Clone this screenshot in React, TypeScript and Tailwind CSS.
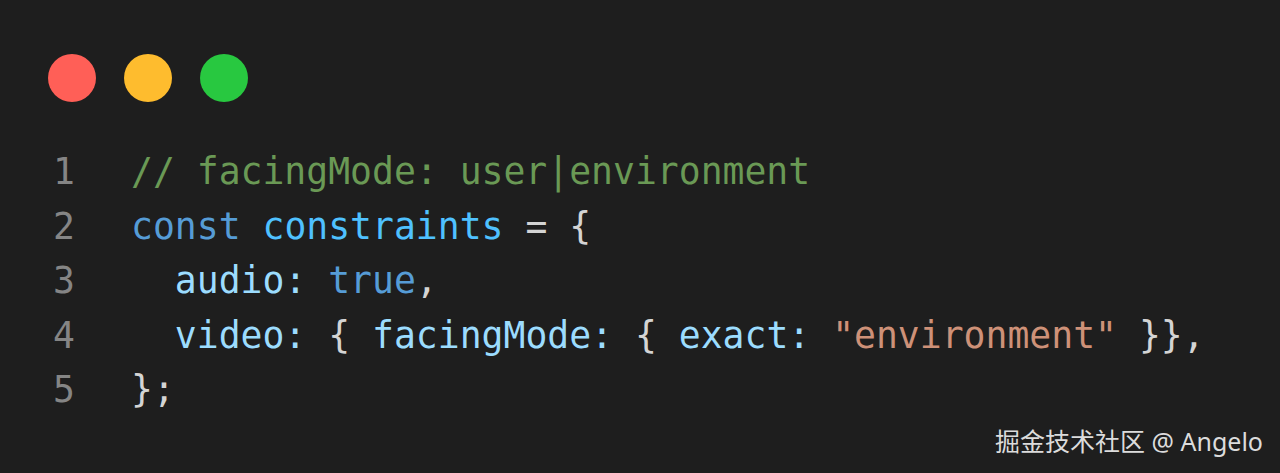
const lines: { t: string; c: string }[][] = [
  [{ t: "// facingMode: user|environment", c: "text-[#6a9955]" }],
  [
    { t: "const", c: "text-[#569cd6]" },
    { t: " ", c: "" },
    { t: "constraints", c: "text-[#4fc1ff]" },
    { t: " = {", c: "text-[#d4d4d4]" },
  ],
  [
    { t: "  audio", c: "text-[#9cdcfe]" },
    { t: ": ", c: "text-[#9cdcfe]" },
    { t: "true", c: "text-[#569cd6]" },
    { t: ",", c: "text-[#d4d4d4]" },
  ],
  [
    { t: "  video: ", c: "text-[#9cdcfe]" },
    { t: "{ ", c: "text-[#d4d4d4]" },
    { t: "facingMode: ", c: "text-[#9cdcfe]" },
    { t: "{ ", c: "text-[#d4d4d4]" },
    { t: "exact: ", c: "text-[#9cdcfe]" },
    { t: "\"environment\"", c: "text-[#ce9178]" },
    { t: " }},", c: "text-[#d4d4d4]" },
  ],
  [{ t: "};", c: "text-[#d4d4d4]" }],
];

export default function App() {
  return (
    <div className="relative w-[1280px] h-[473px] bg-[#1e1e1e] overflow-hidden">
      {/* window dots */}
      <div className="flex gap-[28px] pl-[48px] pt-[54px]">
        <div className="w-[48px] h-[48px] rounded-full bg-[#ff5f57]" />
        <div className="w-[48px] h-[48px] rounded-full bg-[#febc2e]" />
        <div className="w-[48px] h-[48px] rounded-full bg-[#28c840]" />
      </div>

      {/* code */}
      <div
        className="mt-[43px] pl-[53px] text-[36.4px] leading-[54.6px] whitespace-pre"
        style={{ fontFamily: "'DejaVu Sans Mono', monospace" }}
      >
        {lines.map((parts, i) => (
          <div key={i} className="flex">
            <span className="w-[78px] text-[#858585]">{i + 1}</span>
            <span>
              {parts.map((p, j) => (
                <span key={j} className={p.c}>
                  {p.t}
                </span>
              ))}
            </span>
          </div>
        ))}
      </div>

      {/* watermark */}
      <div
        className="absolute right-[17px] top-[424px] text-[25px] leading-[34px] text-[#dcdcdc]"
        style={{ fontFamily: "'Noto Sans', 'Noto Sans CJK SC', sans-serif" }}
      >
        掘金技术社区 @ Angelo
      </div>
    </div>
  );
}
